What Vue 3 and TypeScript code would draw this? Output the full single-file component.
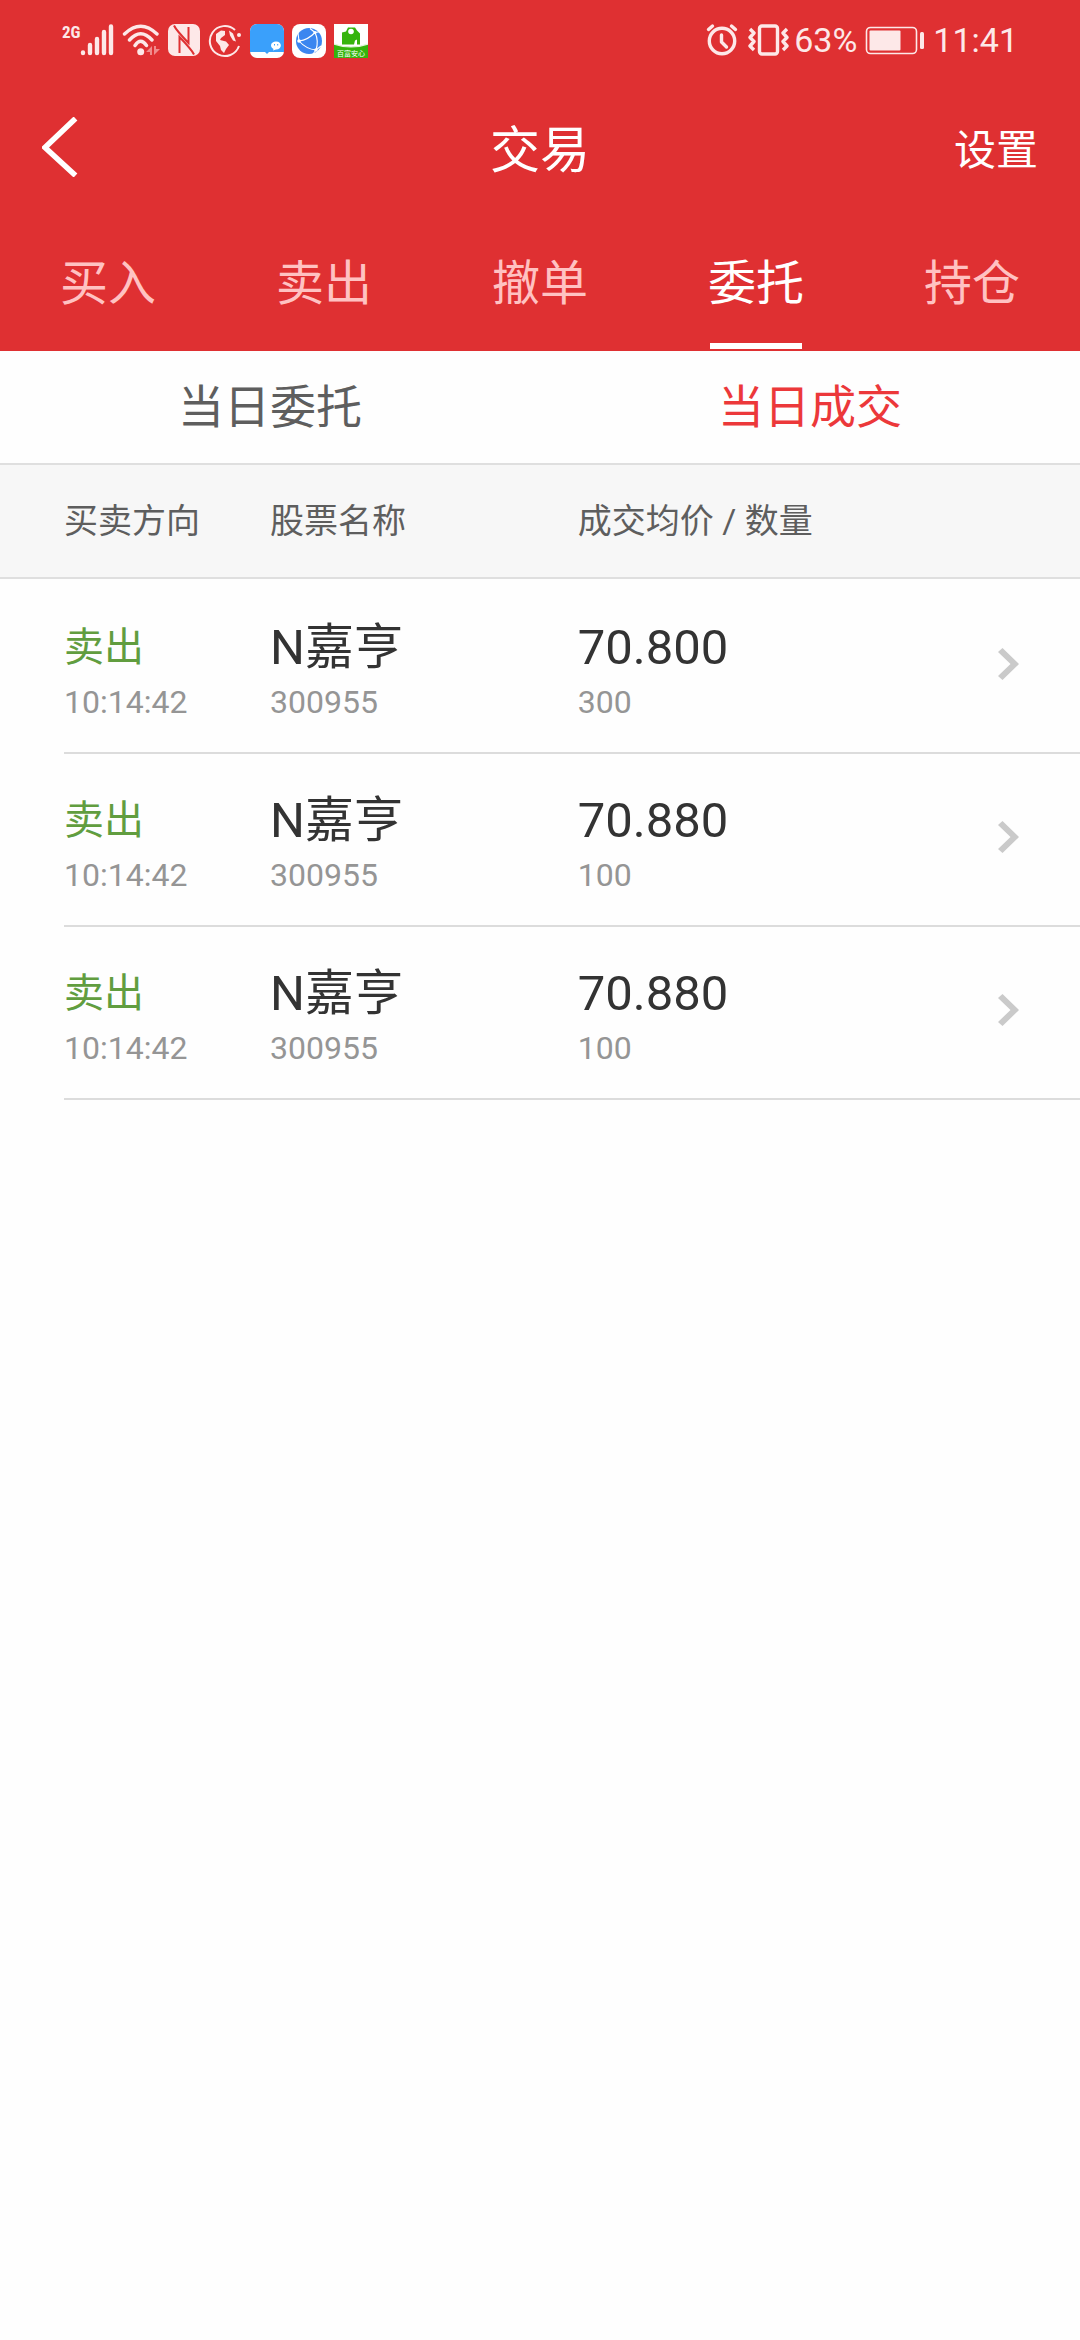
<script setup lang="ts">
import { ref } from 'vue'

interface Deal {
  side: string
  time: string
  name: string
  code: string
  price: string
  amount: number
}

const tabs: string[] = ['买入', '卖出', '撤单', '委托', '持仓']
const activeTab = ref('委托')

const views: string[] = ['当日委托', '当日成交']
const activeView = ref('当日成交')

const deals: Deal[] = [
  { side: '卖出', time: '10:14:42', name: 'N嘉亨', code: '300955', price: '70.800', amount: 300 },
  { side: '卖出', time: '10:14:42', name: 'N嘉亨', code: '300955', price: '70.880', amount: 100 },
  { side: '卖出', time: '10:14:42', name: 'N嘉亨', code: '300955', price: '70.880', amount: 100 },
]
</script>

<template>
  <div class="app">
    <header class="top">
      <div class="status">
        <div class="status-left">
          <span class="net">2G</span>
          <svg width="34" height="36" viewBox="79 22 34 36" aria-hidden="true">
            <g stroke="#fde8e8" stroke-width="4.4" stroke-linecap="round">
              <path d="M82 52.500v.5M89 45v8M96 39v14M103 32v21M110 26.500v26.500" />
            </g>
          </svg>
          <svg width="38" height="36" viewBox="121 22 38 36" aria-hidden="true">
            <g fill="none" stroke="#fde8e8" stroke-width="3.4" stroke-linecap="round">
              <path d="M123.5 34Q139.7 18.5 156 34M128.5 40Q139.7 27.5 151 40M134 45.5Q139.7 37 145.5 45.5" />
            </g>
            <circle cx="139.7" cy="51.7" r="3.5" fill="#fde8e8" />
            <path d="M151 46v9h-2v-3h-4zM153 55v-9h2v3h4z" fill="#f08c8c" />
          </svg>
          <svg width="32" height="36" viewBox="167 22 32 36" aria-hidden="true">
            <rect x="167" y="24" width="32" height="32" rx="7" fill="#fde8e8" />
            <path d="M173 25.500Q175 30 187.500 43V27M193 54.500Q191 50 178.500 37V53" fill="none" stroke="#df3032" stroke-width="2" />
          </svg>
          <svg width="34" height="36" viewBox="208 22 34 36" aria-hidden="true">
            <path d="M235 30A15 15 0 1 0 239 46" fill="none" stroke="#fde8e8" stroke-width="2" />
            <circle cx="239" cy="35" r="2" fill="#fde8e8" />
            <path d="M216 34l5-3.500 4 .5v4l-4 3-1 2 6 1.500 3 3.500-3 4-2 4-3-3-1-4-4-5zM229 30.500l4 3 3 8-3-1-3-5z" fill="#fde8e8" />
          </svg>
          <svg width="34" height="36" viewBox="250 22 34 36" aria-hidden="true">
            <rect x="250" y="24" width="34" height="34" rx="7" fill="#fff" />
            <path d="M257 24h20a7 7 0 0 1 7 7v21h-15l-2 2-2-2h-15v-21a7 7 0 0 1 7-7z" fill="#3aa0fb" />
            <path d="M276 41.500c6.500 0 6.500 8 0 8l-3 1 .5-1.500c-4-2-3-7.500 2.500-7.500z" fill="#fff" />
            <path d="M274.500 44v1.500M277.700 44v1.500" stroke="#3aa0fb" />
          </svg>
          <svg width="34" height="36" viewBox="292 22 34 36" aria-hidden="true">
            <rect x="292" y="24" width="34" height="34" rx="8" fill="#fff" />
            <circle cx="309" cy="41" r="13" fill="#3b86f0" />
            <path d="M299 41Q308 40 315 32.500M299 41Q306 49 316 50M315 32.500Q319 41 316 50M315 32.500l6-1M315 32.500l-5-4M299 41l-1-8M316 50l-3 4M316 50l5-4" fill="none" stroke="#fff" stroke-width="1.100" />
            <g fill="#fff">
              <circle cx="299" cy="41" r="1.800" />
              <circle cx="315" cy="32.500" r="1.600" />
              <circle cx="316" cy="50" r="1.800" />
            </g>
          </svg>
          <svg width="34" height="36" viewBox="334 22 34 36" aria-hidden="true">
            <rect x="334" y="24" width="34" height="34" fill="#fff" />
            <path d="M334 44q17 6 34 0v14h-34z" fill="#35b40c" />
            <path d="M342 44.500v-12l4-1 2-4h7l2 3 3 3v11h-3v-5l-2 1-1 4z" fill="#35b40c" />
            <path d="M334 44q17 6 34 0" fill="none" stroke="#e4f7dc" stroke-width="1.200" />
            <circle cx="351" cy="31.500" r="2.800" fill="#fff" />
            <text x="351" y="55.500" class="app-name">百富安心</text>
          </svg>
        </div>
        <div class="status-right">
          <svg width="32" height="36" viewBox="707 22 32 36" aria-hidden="true">
            <g fill="none" stroke="#fde8e8" stroke-width="3.4" stroke-linecap="round" stroke-linejoin="round">
              <circle cx="723" cy="41" r="12.7" />
              <path d="M722.5 35v7l5 5" />
              <path d="M709.500 29.500l4-3.500M736.500 29.500l-4-3.500" />
            </g>
          </svg>
          <svg width="42" height="36" viewBox="749 22 42 36" aria-hidden="true">
            <g fill="none" stroke="#fde8e8" stroke-width="3.4" stroke-linejoin="round">
              <rect x="760.5" y="26" width="18" height="28" rx="2.5" />
              <path d="M751 29l4 4-4 4.500 4 4-4 4.500 4 4M788 29l-4 4 4 4.500-4 4 4 4.500-4 4" />
            </g>
          </svg>
          <span class="battery-text">63%</span>
          <svg class="battery" width="60" height="36" viewBox="866 22 60 36" aria-hidden="true">
            <rect x="867.5" y="27.500" width="50" height="26" rx="4" fill="none" stroke="#fde8e8" stroke-width="1.6" />
            <rect x="870.5" y="30.500" width="31" height="20" rx="1" fill="#fde8e8" />
            <rect x="921" y="32" width="4" height="17" rx="1.5" fill="#fde8e8" />
          </svg>
          <time class="clock">11:41</time>
        </div>
      </div>

      <div class="bar">
        <button class="back" type="button" aria-label="返回">
          <svg width="36" height="60" viewBox="0 0 36 60" aria-hidden="true">
            <path d="M33.500 1.500L3 30.500L33.500 58.500" fill="none" stroke="#fff" stroke-width="5.5" />
          </svg>
        </button>
        <h1 class="title">交易</h1>
        <button class="settings" type="button">设置</button>
      </div>

      <nav class="tabs">
        <button
          v-for="tab in tabs"
          :key="tab"
          type="button"
          class="tab"
          :class="{ active: tab === activeTab }"
          @click="activeTab = tab"
        >
          <span class="tab-label">{{ tab }}</span>
        </button>
      </nav>
    </header>

    <main>
      <div class="views">
        <button
          v-for="view in views"
          :key="view"
          type="button"
          class="view"
          :class="{ active: view === activeView }"
          @click="activeView = view"
        >
          {{ view }}
        </button>
      </div>

      <table class="deals">
        <thead>
          <tr>
            <th class="col-side" scope="col">买卖方向</th>
            <th class="col-name" scope="col">股票名称</th>
            <th scope="col">成交均价 / 数量</th>
            <td class="col-more"></td>
          </tr>
        </thead>
        <tbody>
          <tr v-for="(deal, i) in deals" :key="i">
            <td class="col-side">
              <div class="main side">{{ deal.side }}</div>
              <div class="sub">{{ deal.time }}</div>
            </td>
            <td>
              <div class="main">{{ deal.name }}</div>
              <div class="sub">{{ deal.code }}</div>
            </td>
            <td>
              <div class="main">{{ deal.price }}</div>
              <div class="sub">{{ deal.amount }}</div>
            </td>
            <td class="col-more">
              <button class="more" type="button" aria-label="详情">
                <svg width="22" height="32" viewBox="0 0 22 32" aria-hidden="true">
                  <path d="M4.500 0L21 16 4.500 32 0 28 12.500 16 0 4z" fill="#cacaca" />
                </svg>
              </button>
            </td>
          </tr>
        </tbody>
      </table>
    </main>
  </div>
</template>

<style>
body {
  margin: 0;
  background: #fefefe;
}
</style>

<style scoped>
.app {
  font-family: Roboto, 'Noto Sans CJK SC', sans-serif;
  color: #333;
}

button {
  margin: 0;
  padding: 0;
  border: 0;
  background: none;
  color: inherit;
  font: inherit;
  cursor: pointer;
}

svg {
  display: block;
  flex: none;
}

.top {
  background: #df3032;
  color: #fff;
}

.status {
  display: flex;
  justify-content: space-between;
  align-items: center;
  height: 80px;
  padding: 0 62px;
  color: #fde8e8;
}

.status-left,
.status-right {
  display: flex;
  align-items: center;
}

.status-left {
  gap: 8px;
}

.net {
  align-self: flex-start;
  margin-right: -9px;
  font: 700 17px/20px 'Roboto Condensed', Roboto, sans-serif;
}

.app-name {
  fill: #fff;
  font-size: 7px;
  text-anchor: middle;
}

.status-right {
  font-size: 34px;
  line-height: 40px;
}

.status-right svg + svg {
  margin-left: 10px;
}

.battery-text {
  margin-left: 4px;
}

.battery {
  margin: 0 8px;
}

.bar {
  display: grid;
  grid-template-columns: 1fr auto 1fr;
  align-items: center;
  height: 134px;
  padding: 0 42px;
}

.back {
  justify-self: start;
}

.title,
.settings {
  padding-top: 8px;
  line-height: 60px;
}

.title {
  margin: 0;
  font-size: 50px;
  font-weight: 400;
}

.settings {
  justify-self: end;
  font-size: 42px;
}

.tabs {
  display: grid;
  grid-template-columns: repeat(5, 1fr);
}

.tab {
  height: 137px;
  padding-bottom: 2px;
  color: #ffc2c2;
  font-size: 48px;
}

.tab-label {
  display: inline-block;
  box-sizing: border-box;
  height: 135px;
  padding-top: 4px;
  line-height: 131px;
}

.tab.active {
  color: #fff;
}

.tab.active .tab-label {
  background: linear-gradient(#fff, #fff) 50% 100% / 92px 6px no-repeat;
}

.views {
  display: grid;
  grid-template-columns: 1fr 1fr;
  border-bottom: 2px solid #dfdfdf;
}

.view {
  height: 112px;
  padding-bottom: 8px;
  color: #5e5e5e;
  font-size: 46px;
}

.view.active {
  color: #ec383a;
}

.deals {
  width: 100%;
  table-layout: fixed;
  border-spacing: 0;
}

th,
td {
  box-sizing: border-box;
  padding: 0;
  text-align: left;
}

thead th,
thead td {
  height: 114px;
  padding-bottom: 6px;
  border-bottom: 2px solid #dfdfdf;
  background: #f7f7f7;
  color: #5e5e5e;
  font-size: 34px;
  font-weight: 400;
}

.col-side {
  width: 25%;
  padding-left: 64px;
}

.col-name {
  width: 28.5%;
}

.col-more {
  width: 120px;
}

tbody td {
  height: 173px;
  padding-top: 35px;
  border-bottom: 2px solid #dcdcdc;
  vertical-align: top;
}

tbody tr:first-child td {
  height: 175px;
  padding-top: 37px;
}

/* the divider is inset to line up with the first column */
tbody .col-side {
  border-bottom: 0;
  background: linear-gradient(#dcdcdc, #dcdcdc) 64px 100% / 100% 2px no-repeat;
}

.main {
  height: 64px;
  font-size: 49px;
  line-height: 64px;
}

.side {
  color: #619d3f;
  font-size: 40px;
}

.sub {
  color: #959595;
  font-size: 32px;
  line-height: 44px;
}

.more {
  display: block;
  margin: 32px 60px 0 auto;
}
</style>
